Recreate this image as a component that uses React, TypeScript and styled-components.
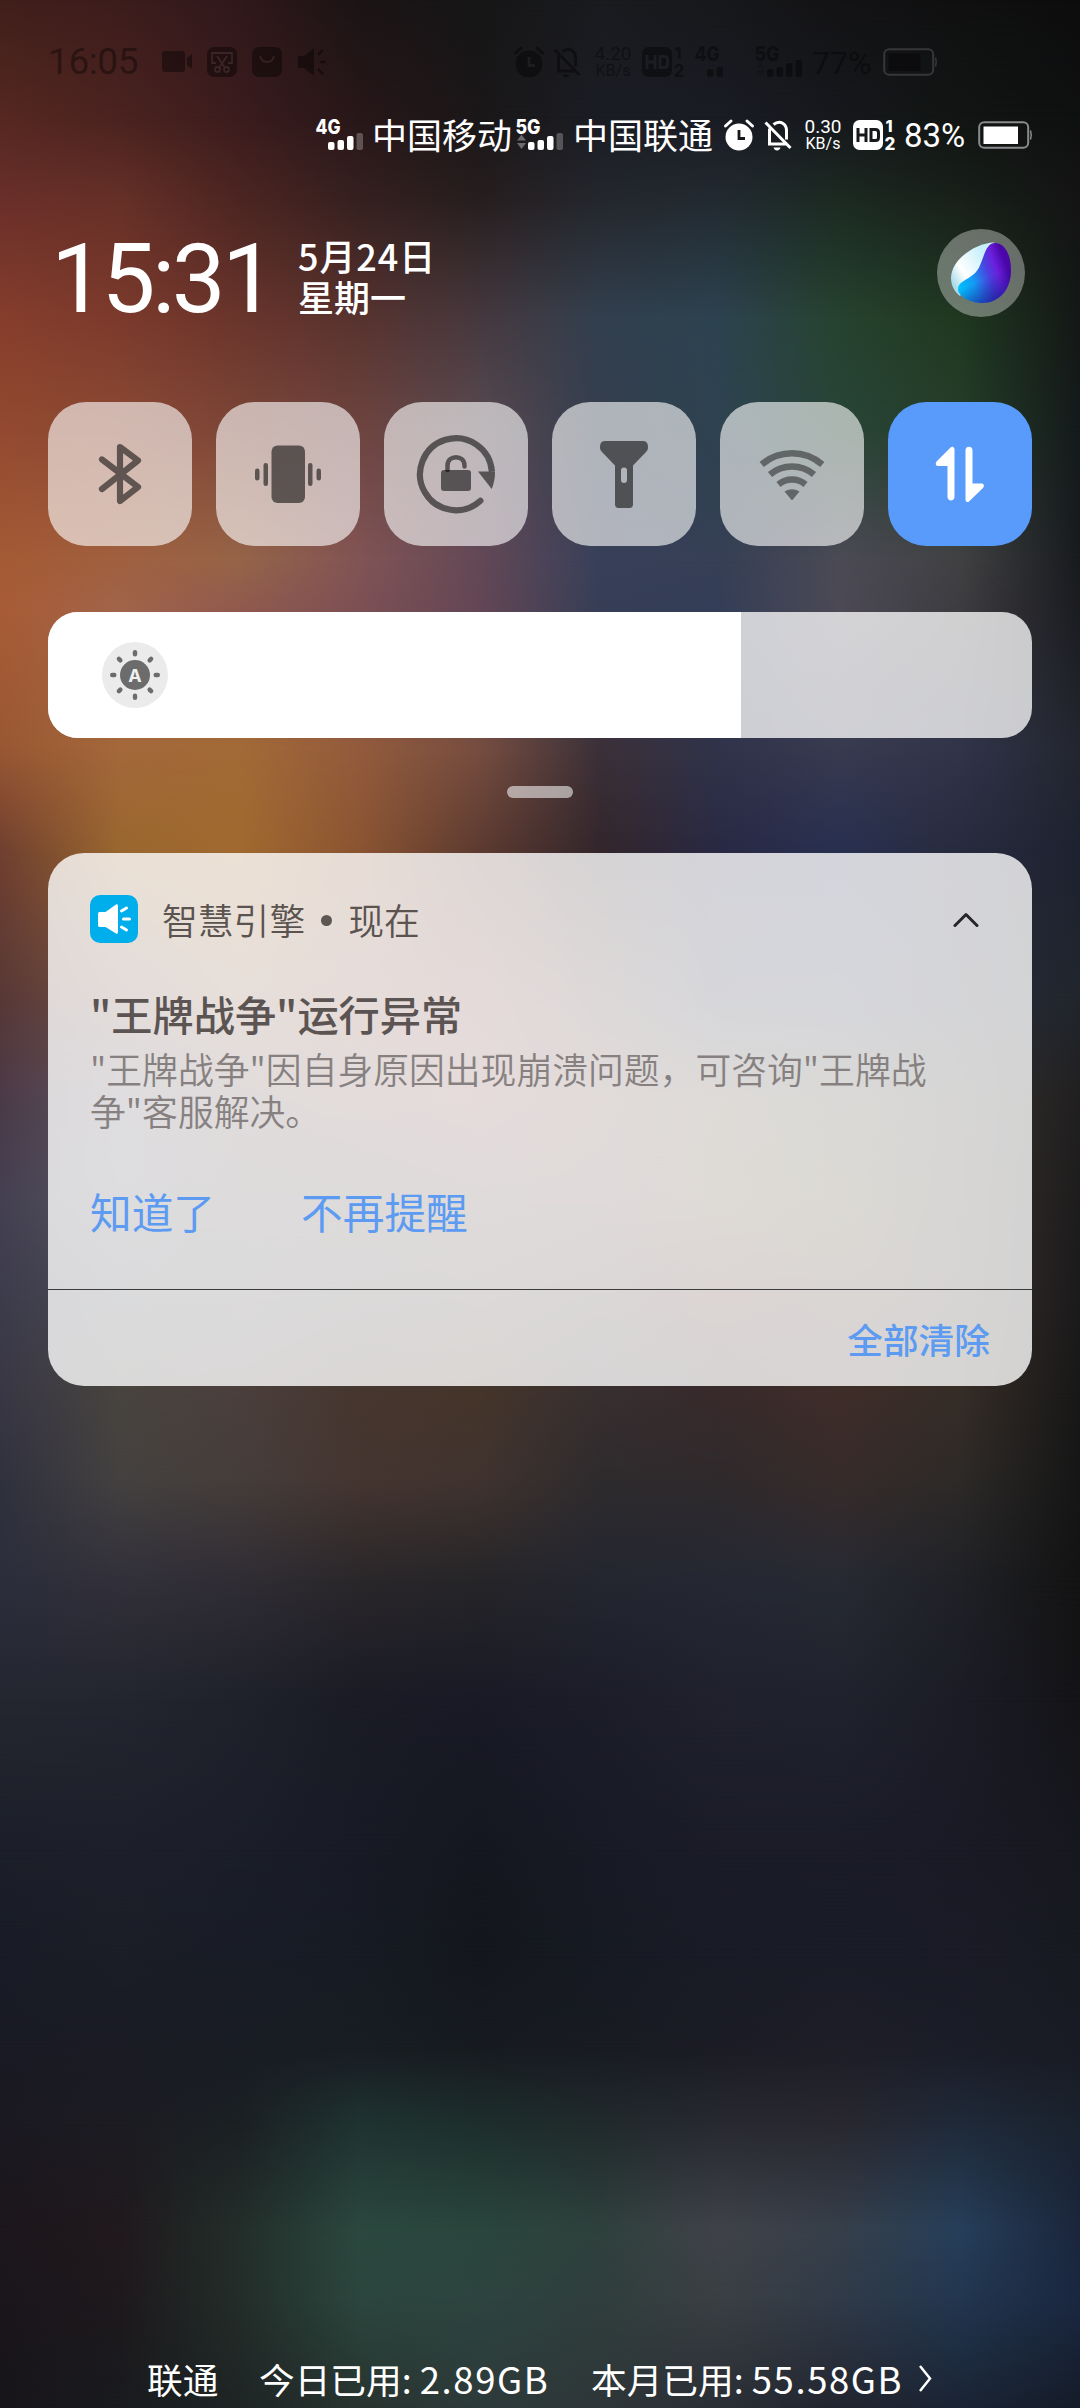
import React from "react";
import styled, { createGlobalStyle } from "styled-components";

const GlobalStyle = createGlobalStyle`
  html, body { margin: 0; padding: 0; background: #17181f; }
  * { box-sizing: border-box; }
`;

const cjk = `"Noto Sans CJK SC", "Noto Sans", sans-serif`;
const latin = `Roboto, "Noto Sans CJK SC", sans-serif`;

/* Wallpaper: colour samples every 120px across, one row per y position. */
const rows: Array<{ y: number; c: string }> = [
  { y: 0, c: "401f1b 3c1d1c 30181b 1b1415 161617 1a1b1f 17181b 131315 101011 0d0d0e" },
  { y: 120, c: "562821 4b2320 3b1c1d 281719 1a1718 1b1d24 1a1c24 16181c 121513 0f1010" },
  { y: 200, c: "6a2f2a 663027 4c2522 35201f 271e1f 24272d 222a31 1c2a22 18201a 141414" },
  { y: 320, c: "863e2c 7c3a2c 6a352c 58332f 46393f 33404f 2d4350 26432f 203820 141817" },
  { y: 430, c: "924a30 8c4a34 7c4638 6e4440 594a51 343d4e 2e4350 284437 263e2a 141a1b" },
  { y: 560, c: "a45a35 a0603f 966448 815455 634856 38405a 363f55 4b4a55 414143 181a1e" },
  { y: 610, c: "a85c36 a1644a 90594e 7c5054 634655 363e56 343e58 4c4955 3d3c40 1b1c21" },
  { y: 750, c: "985733 a4683a a26a36 935b3c 764d40 3b3038 30334a 383a50 31344a 23262f" },
  { y: 850, c: "703f30 99672f a0692f 8a5432 5c3a30 33262b 292944 283050 282b3e 1e2230" },
  { y: 1000, c: "573836 715048 866044 825046 7b4844 584240 34374a 34384e 2b2d3c 21252c" },
  { y: 1100, c: "4b3a48 605662 685050 74504e 804e4c 6c4c48 5a4a3c 4a443a 36342f 211f20" },
  { y: 1200, c: "444052 575660 564c4e 5a4a4a 644c4c 644848 5c4a36 50442a 38322c 1e1c1d" },
  { y: 1300, c: "3d3c4c 484a52 504a4c 4c4644 50423e 483c38 502e2a 46342a 3a302a 1b1b1c" },
  { y: 1390, c: "393745 48443f 4b3f3c 46362f 45352a 382f30 392a2c 3f2d29 362d27 181818" },
  { y: 1480, c: "30313e 444140 453d3a 453530 40332f 2e2b2d 2f2a2c 372b2a 2d2a28 161616" },
  { y: 1580, c: "2c2e3c 32303a 302d34 2a272a 262528 242630 252833 272a33 202126 131313" },
  { y: 1700, c: "242630 23252f 1f212b 1a1b25 191a26 1c1d29 20212d 20222d 1b1c26 141417" },
  { y: 1850, c: "1c1f29 1d1f2a 1b1e29 181a25 151720 181a25 1b1c28 1b1c28 1a1a26 17181f" },
  { y: 1960, c: "191b26 1b1d27 191c26 171b24 14171c 171a23 191b26 1a1c27 1a1b26 181a22" },
  { y: 2050, c: "191a24 1a1b24 191c24 181d22 171b20 191b23 1b1c25 1e1e28 1b1d28 191b24" },
  { y: 2120, c: "1b1921 1c1c22 1b2023 1f3230 1d2d2b 20292b 272830 28272f 1f2938 1a222d" },
  { y: 2230, c: "1c171c 20191d 232e2a 2b483f 29463d 2f413d 404249 363f4a 263f5a 1b263c" },
  { y: 2300, c: "1a161b 1e191d 232d29 2b463e 2d443f 303e3d 3a3f43 303a48 22364f 1a2740" },
  { y: 2408, c: "18151a 191b1e 1e2525 28332f 2d3a3a 2e3638 2a2e35 22252f 1a2434 151c28" },
];
const ramp = (c: string) =>
  `linear-gradient(to right, ${c.split(" ").map((v) => "#" + v).join(", ")})`;

const Screen = styled.main`
  width: 1080px;
  height: 2408px;
  display: grid;
  grid-template: 2408px / 1080px;
  overflow: hidden;
  font-family: ${cjk};
`;

const Wallpaper = styled.div`
  grid-area: 1 / 1;
  display: flex;
  flex-direction: column;
`;

const Band = styled.div<{ $h: number; $from: string; $to: string }>`
  flex: none;
  height: ${(p) => p.$h}px;
  display: flex;
  background: ${(p) => p.$from};
  &::after {
    content: "";
    flex: 1;
    background: ${(p) => p.$to};
    -webkit-mask-image: linear-gradient(transparent, #000);
    mask-image: linear-gradient(transparent, #000);
  }
`;

const Shade = styled.div`
  grid-area: 1 / 1;
  z-index: 1;
  display: flex;
  flex-direction: column;
  padding: 0 48px;
  color: #fff;
`;

const StatusRow = styled.div<{ $ghost?: boolean }>`
  display: flex;
  align-items: center;
  flex: none;
  height: ${(p) => (p.$ghost ? 32 : 34)}px;
  margin-top: ${(p) => (p.$ghost ? 46 : 40)}px;
  justify-content: ${(p) => (p.$ghost ? "flex-start" : "flex-end")};
  color: ${(p) => (p.$ghost ? "rgba(0,0,0,.4)" : "#fff")};
  --hole: ${(p) => (p.$ghost ? "#1c1d22" : "#17181b")};
`;

const Slot = styled.span<{ $w: number; $l?: number }>`
  display: flex;
  flex: none;
  width: ${(p) => p.$w}px;
  margin-left: ${(p) => p.$l ?? 0}px;
  white-space: nowrap;
  svg { display: block; overflow: visible; flex: none; }
`;

const Carrier = styled(Slot)`
  height: 36px;
  font: 400 35px/34px ${cjk};
`;

const Percent = styled(Slot)<{ $size?: number }>`
  font: 400 ${(p) => p.$size ?? 33}px/34px ${latin};
  padding-top: 2px;
`;

const Speed = styled(Slot)`
  flex-direction: column;
  align-items: center;
  font: 400 19px/17px ${latin};
  small { font-size: 16px; line-height: 17px; }
`;

const SignalIcon = ({ label, arrows, bars }: { label: string; arrows?: boolean; bars: number[] }) => (
  <svg width="47" height="32" viewBox="0 0 47 32" fill="currentColor">
    <text x="-0.5" y="15" fontFamily="Inter, Roboto, sans-serif" fontWeight="800" fontSize="20" textLength="25" lengthAdjust="spacingAndGlyphs">{label}</text>
    {arrows && <path d="M5.5 15.500l4.500 6h-9zM5.500 30l4.500-6h-9z" opacity=".35" />}
    {bars.map((h, i) => (
      <rect key={i} x={12 + i * 9.5} y={31 - Math.abs(h)} width="6.500" height={Math.abs(h)} rx="2" opacity={h < 0 ? 0.25 : 1} />
    ))}
  </svg>
);

const AlarmIcon = () => (
  <svg width="30" height="32" viewBox="0 0 30 32">
    <circle cx="15" cy="18" r="13.500" fill="currentColor" />
    <path d="M1.500 7 7 2M28.500 7 23 2" stroke="currentColor" strokeWidth="3" strokeLinecap="round" />
    <path d="M15 11v8.500h6" fill="none" stroke="var(--hole)" strokeWidth="2.800" />
  </svg>
);

const MuteIcon = () => (
  <svg width="28" height="32" viewBox="0 0 28 32" fill="none" stroke="currentColor" strokeWidth="3">
    <path d="M1.500 3.500 26.500 29M5.500 9.500v15.500h16.500M9.500 5.500c7-5.500 13 0 13 6v9" />
    <path d="M9.500 28.500h7c-1 4-6 4-7 0z" fill="currentColor" stroke="none" />
  </svg>
);

const HdIcon = () => (
  <svg width="43" height="32" viewBox="0 0 43 32" fill="currentColor">
    <rect y="1" width="30" height="30" rx="6.500" />
    <g fill="none" stroke="var(--hole)" strokeWidth="3">
      <path d="M5 9v14M13 9v14M5 16h8M18 10.500h4.500q3 0 3 3v5q0 3-3 3H18z" />
    </g>
    <text x="32.500" y="13" fontFamily="Inter, sans-serif" fontWeight="800" fontSize="16">1</text>
    <text x="31.500" y="31" fontFamily="Inter, sans-serif" fontWeight="800" fontSize="17">2</text>
  </svg>
);

const BatteryIcon = ({ ghost }: { ghost?: boolean }) => (
  <svg width="54" height="28" viewBox="0 0 54 28">
    <rect x="1.200" y="1.200" width="49" height="25.600" rx="5" fill="none" stroke={ghost ? "#37373b" : "#8b8b8d"} strokeWidth="2" />
    <path d="M52.500 9.500q1.500 4.500 0 9" fill="none" stroke={ghost ? "#37373b" : "#8b8b8d"} strokeWidth="1.500" />
    <rect x="5.500" y="5.500" width={ghost ? 32 : 34.500} height="17.500" fill={ghost ? "#0c0c0e" : "#fff"} />
  </svg>
);

const GhostTime = styled(Slot)`
  font: 400 37px/32px ${latin};
  letter-spacing: -0.4px;
`;

const Header = styled.header`
  display: flex;
  align-items: center;
  flex: none;
  height: 90px;
  margin-top: 76px;
  padding: 0 7px 0 0;
`;

const Clock = styled.div`
  width: 250px;
  font: 400 96px/90px ${latin};
  letter-spacing: -3.5px;
  white-space: nowrap;
  padding: 11px 0 0 3px;
`;

const DateBlock = styled.div`
  flex: 1;
  font: 500 36px/41px ${cjk};
  padding-top: 5px;
`;

const DayLine = styled.div`
  letter-spacing: 0.9px;
`;

const Assistant = styled.div`
  width: 88px;
  height: 88px;
  border-radius: 50%;
  background: rgba(255, 255, 255, 0.35);
  display: grid;
  place-items: center;
`;

const Tiles = styled.section`
  display: flex;
  flex: none;
  gap: 24px;
  margin-top: 84px;
`;

const Tile = styled.button<{ $on?: boolean }>`
  width: 144px;
  height: 144px;
  padding: 0;
  border: 0;
  border-radius: 38px;
  display: grid;
  place-items: center;
  color: ${(p) => (p.$on ? "#fff" : "rgba(0,0,0,.55)")};
  background: ${(p) => (p.$on ? "#589bfa" : "rgba(255,255,255,.61)")};
`;

const WifiIcon = styled.svg`
  opacity: 0.8;
`;

const Brightness = styled.section`
  display: flex;
  flex: none;
  height: 126px;
  margin-top: 66px;
  border-radius: 30px;
  overflow: hidden;
  background: rgba(255, 255, 255, 0.76);
`;

const Level = styled.div`
  width: 693px;
  background: #fff;
  display: flex;
  align-items: center;
  padding-left: 54px;
`;

const Handle = styled.div`
  flex: none;
  align-self: center;
  width: 66px;
  height: 12px;
  margin: 48px 0 55px;
  border-radius: 6px;
  background: rgba(255, 255, 255, 0.55);
`;

const Card = styled.article`
  flex: none;
  height: 533px;
  border-radius: 36px;
  display: flex;
  flex-direction: column;
  overflow: hidden;
  background: rgba(255, 255, 255, 0.8);
`;

const CardBody = styled.div`
  height: 437px;
  padding: 42px 42px 0;
  border-bottom: 1px solid #3a393b;
`;

const AppLine = styled.div`
  display: flex;
  align-items: center;
  height: 48px;
  font-size: 35.8px;
  line-height: 48px;
  font-weight: 350;
  color: #5a5350;
  white-space: nowrap;
`;

const AppIcon = styled.div`
  width: 48px;
  height: 48px;
  margin-right: 24px;
  border-radius: 10px;
  background: #00aeec;
`;

const Dot = styled.i`
  width: 11px;
  height: 11px;
  margin: 2px 16px 0 16px;
  border-radius: 50%;
  background: #5d5653;
`;

const Chevron = styled.svg`
  margin: 2px 11px 0 auto;
`;

const Title = styled.h2`
  margin: 43px 0 0;
  font-size: 41.2px;
  line-height: 54px;
  font-weight: 500;
  color: #5b5452;
  white-space: nowrap;
`;

const Message = styled.p`
  margin: 7px 0 0;
  font-size: 35.8px;
  line-height: 42px;
  font-weight: 350;
  color: #868180;
  white-space: nowrap;
`;

const Actions = styled.div`
  display: flex;
  gap: 86px;
  margin-top: 53px;
  font-size: 41.7px;
  line-height: 54px;
  font-weight: 400;
  color: #5c9bf1;
`;

const CardFoot = styled.footer`
  flex: 1;
  display: flex;
  align-items: center;
  justify-content: flex-end;
  padding: 0 42px 0 0;
  font-size: 35.7px;
  font-weight: 500;
  color: #5c9bf1;
`;

const Usage = styled.footer`
  display: flex;
  align-items: center;
  margin-top: auto;
  height: 56px;
  font: 400 35.7px/54px ${cjk};
  padding: 0 0 2px 99px;
`;

const Item = styled.span<{ $w: number }>`
  width: ${(p) => p.$w}px;
  white-space: nowrap;
`;

const Num = styled.span`
  font-size: 36.5px;
  letter-spacing: 1.6px;
`;

const rays = [0, 45, 90, 135, 180, 225, 270, 315];

export default function App() {
  return (
    <>
      <GlobalStyle />
      <Screen>
        <Wallpaper>
          {rows.slice(0, -1).map((r, i) => (
            <Band key={r.y} $h={rows[i + 1].y - r.y} $from={ramp(r.c)} $to={ramp(rows[i + 1].c)} />
          ))}
        </Wallpaper>
        <Shade>
          <StatusRow $ghost>
            <GhostTime $w={93}>16:05</GhostTime>
            <Slot $w={31} $l={21}>
              <svg width="31" height="22" viewBox="0 0 31 22" fill="currentColor">
                <rect width="23" height="21" rx="3" /><path d="M25 7l5-4v15l-5-4z" />
              </svg>
            </Slot>
            <Slot $w={30} $l={14}>
              <svg width="30" height="30" viewBox="0 0 30 30">
                <rect width="30" height="30" rx="7" fill="currentColor" />
                <path d="M9 16H5V6h20v10h-4M10 9l8 12M20 9l-8 12" fill="none" stroke="#3b2427" strokeWidth="1.800" />
                <circle cx="10.500" cy="22.500" r="2.500" fill="none" stroke="#3b2427" strokeWidth="1.800" />
                <circle cx="19.500" cy="22.500" r="2.500" fill="none" stroke="#3b2427" strokeWidth="1.800" />
              </svg>
            </Slot>
            <Slot $w={30} $l={15}>
              <svg width="30" height="30" viewBox="0 0 30 30">
                <rect width="30" height="30" rx="7" fill="currentColor" />
                <path d="M8 9c2 8 12 8 14 0" fill="none" stroke="#33201f" strokeWidth="2.200" />
              </svg>
            </Slot>
            <Slot $w={30} $l={15}>
              <svg width="30" height="30" viewBox="0 0 30 30">
                <path d="M1 9h6l10-8v28L7 21H1z" fill="currentColor" />
                <path d="M21 8l5-5M23 15h6M21 22l5 5" stroke="currentColor" strokeWidth="2.500" />
              </svg>
            </Slot>
            <Slot $w={30} $l={187}><AlarmIcon /></Slot>
            <Slot $w={28} $l={9}><MuteIcon /></Slot>
            <Speed $w={40} $l={12}>4.20<small>KB/s</small></Speed>
            <Slot $w={43} $l={9}><HdIcon /></Slot>
            <Slot $w={47} $l={10}><SignalIcon label="4G" bars={[8, 10]} /></Slot>
            <Slot $w={47} $l={13}><SignalIcon label="5G" arrows bars={[8, 10, 14, 17]} /></Slot>
            <Percent $w={66} $l={10} $size={32}>77%</Percent>
            <Slot $w={54} $l={5}><BatteryIcon ghost /></Slot>
          </StatusRow>

          <StatusRow>
            <Slot $w={47}><SignalIcon label="4G" bars={[8, 10, 14, -17]} /></Slot>
            <Carrier $w={140} $l={9}>中国移动</Carrier>
            <Slot $w={47} $l={4}><SignalIcon label="5G" arrows bars={[8, 10, 14, -17]} /></Slot>
            <Carrier $w={140} $l={10}>中国联通</Carrier>
            <Slot $w={30} $l={11}><AlarmIcon /></Slot>
            <Slot $w={28} $l={10}><MuteIcon /></Slot>
            <Speed $w={40} $l={11}>0.30<small>KB/s</small></Speed>
            <Slot $w={43} $l={10}><HdIcon /></Slot>
            <Percent $w={66} $l={8}>83%</Percent>
            <Slot $w={54} $l={8}><BatteryIcon /></Slot>
          </StatusRow>

          <Header>
            <Clock>15:31</Clock>
            <DateBlock>
              <DayLine>5月24日</DayLine>
              <div>星期一</div>
            </DateBlock>
            <Assistant>
              <svg width="60" height="62" viewBox="0 0 60 62">
                <defs>
                  <linearGradient id="pale" x1="0" y1="0.700" x2="0.700" y2="0.200">
                    <stop offset="0" stopColor="#a9dcec" /><stop offset=".35" stopColor="#fff" /><stop offset="1" stopColor="#c8f0fb" />
                  </linearGradient>
                  <linearGradient id="deep" x1="0" y1="0.700" x2="0.900" y2="0.350">
                    <stop offset="0" stopColor="#00c0fb" /><stop offset=".3" stopColor="#139bf5" />
                    <stop offset=".62" stopColor="#4a42e0" /><stop offset=".8" stopColor="#6a1fdc" /><stop offset="1" stopColor="#4a06a8" />
                  </linearGradient>
                  <linearGradient id="under" x1="0.500" y1="0.600" x2="0.650" y2="1">
                    <stop offset="0" stopColor="#20128c" stopOpacity="0" /><stop offset="1" stopColor="#1b1590" stopOpacity=".75" />
                  </linearGradient>
                </defs>
                <path d="M43 0.500C24 1 0 18 0 36c0 8 4 14 9 18L45 4z" fill="url(#pale)" />
                <path d="M44 1c10 0 16 12 16 27 0 20-12 33-29 33-10 0-24-6-24-14 0-7 9-9 16-15C33 24 32 1 44 1z" fill="url(#deep)" />
                <path d="M44 1c10 0 16 12 16 27 0 20-12 33-29 33-10 0-24-6-24-14 0-7 9-9 16-15C33 24 32 1 44 1z" fill="url(#under)" />
              </svg>
            </Assistant>
          </Header>

          <Tiles>
            <Tile aria-label="bluetooth">
              <svg width="60" height="72" viewBox="0 0 60 72" fill="none" stroke="currentColor" strokeWidth="6.200" strokeLinecap="round" strokeLinejoin="round">
                <path d="M12 21.500 48 49 30 63V9L48 22.500 12 51" />
              </svg>
            </Tile>
            <Tile aria-label="vibrate">
              <svg width="70" height="60" viewBox="0 0 70 60" fill="currentColor">
                <rect x="18.500" y="1.500" width="33.500" height="57.500" rx="6" />
                <rect x="10.500" y="19" width="4.500" height="23" rx="2.200" /><rect x="55" y="19" width="4.500" height="23" rx="2.200" />
                <rect x="2" y="24.500" width="4.500" height="12" rx="2.200" /><rect x="63.500" y="24.500" width="4.500" height="12" rx="2.200" />
              </svg>
            </Tile>
            <Tile aria-label="rotation lock">
              <svg width="80" height="80" viewBox="0 0 80 80">
                <path d="M64.400 66.700A36 36 0 1 1 75.900 37.500" fill="none" stroke="currentColor" strokeWidth="6.200" />
                <path d="M62.300 64.500a3.100 3.100 0 1 1 4.200 4.600z" fill="currentColor" />
                <path d="M62 37.500H79q.2 9-3.300 17.500z" fill="currentColor" />
                <rect x="25" y="36" width="30" height="21" rx="3" fill="currentColor" />
                <path d="M31.500 36v-4.500c0-11 17-11 17 0v1" fill="none" stroke="currentColor" strokeWidth="4.500" strokeLinecap="round" />
              </svg>
            </Tile>
            <Tile aria-label="flashlight">
              <svg width="50" height="70" viewBox="0 0 50 70" fill="currentColor">
                <path fillRule="evenodd" d="M5 2h40q4.500 1 4 7 0 2-2 4L34 26.500V66q-.5 3-3.500 3h-11q-3 0-3.500-3V26.500L3 13q-2-2-2-4-.5-6 4-7zM25 28.500q-3 0-3 3V41q0 3 3 3t3-3v-9.500q0-3-3-3z" />
              </svg>
            </Tile>
            <Tile aria-label="wifi">
              <WifiIcon width="66" height="52" viewBox="0 0 66 52" fill="none" stroke="currentColor" strokeWidth="6.500">
                <path d="M2.700 16.500a46.500 46.500 0 0 1 60.600 0M11 26.500a34 34 0 0 1 44 0M19.500 36.500a21 21 0 0 1 27 0" />
                <path d="M25.500 43.500q7.500-4.500 15 0L33 52.500z" fill="currentColor" stroke="none" />
              </WifiIcon>
            </Tile>
            <Tile $on aria-label="mobile data">
              <svg width="50" height="56" viewBox="0 0 50 56" fill="currentColor">
                <path d="M19 2.500c0-2-2-2-3.500-1L2 15c-2 2-1.500 5 1 5h9.500v31c0 4.500 7 4.500 7 0V2.500z" />
                <path d="M30.500 53.500V4c0-4.500 7-4.500 7 0v33.500H47c2 0 2.500 3 1 4.500L34 55.500c-1.500 1.500-3.500 0-3.500-2z" />
              </svg>
            </Tile>
          </Tiles>

          <Brightness>
            <Level>
              <svg width="66" height="66" viewBox="0 0 66 66">
                <circle cx="33" cy="33" r="33" fill="#ebebeb" />
                <circle cx="33" cy="33" r="15" fill="#6c6c6c" />
                {rays.map((a) => (
                  <rect key={a} x="30.800" y="8" width="4.400" height="6.500" rx="2.200" fill="#6c6c6c" transform={`rotate(${a} 33 33)`} />
                ))}
                <text x="33" y="39.500" textAnchor="middle" fontFamily="Inter, sans-serif" fontWeight="700" fontSize="18" fill="#f0f0f0">A</text>
              </svg>
            </Level>
          </Brightness>

          <Handle />

          <Card>
            <CardBody>
              <AppLine>
                <AppIcon>
                  <svg width="48" height="48" viewBox="0 0 48 48">
                    <path d="M9.500 17h6L26 9.500q2-.8 2 1.500v26q0 2.300-2 1.500L15.500 32h-6Q8 32 8 30V19q0-2 1.500-2z" fill="#fff" />
                    <path d="M31.500 16l5-3M33.500 24h6M31.500 32l5 3" stroke="#fff" strokeWidth="3" strokeLinecap="round" />
                  </svg>
                </AppIcon>
                智慧引擎
                <Dot />
                现在
                <Chevron width="26" height="16" viewBox="0 0 26 16" fill="none" stroke="#25252a" strokeWidth="3" strokeLinecap="round" strokeLinejoin="round">
                  <path d="M2 13.500 13 2.500l11 11" />
                </Chevron>
              </AppLine>
              <Title>"王牌战争"运行异常</Title>
              <Message>
                "王牌战争"因自身原因出现崩溃问题，可咨询"王牌战
                <br />
                争"客服解决。
              </Message>
              <Actions>
                <span>知道了</span>
                <span>不再提醒</span>
              </Actions>
            </CardBody>
            <CardFoot>全部清除</CardFoot>
          </Card>

          <Usage>
            <Item $w={112}>联通</Item>
            <Item $w={332}>今日已用: <Num>2.89GB</Num></Item>
            <Item $w={326}>本月已用: <Num>55.58GB</Num></Item>
            <svg width="16" height="30" viewBox="0 0 16 30" fill="none" stroke="#fff" strokeWidth="2.500">
              <path d="M3 2l10 12.500L3 27" />
            </svg>
          </Usage>
        </Shade>
      </Screen>
    </>
  );
}
